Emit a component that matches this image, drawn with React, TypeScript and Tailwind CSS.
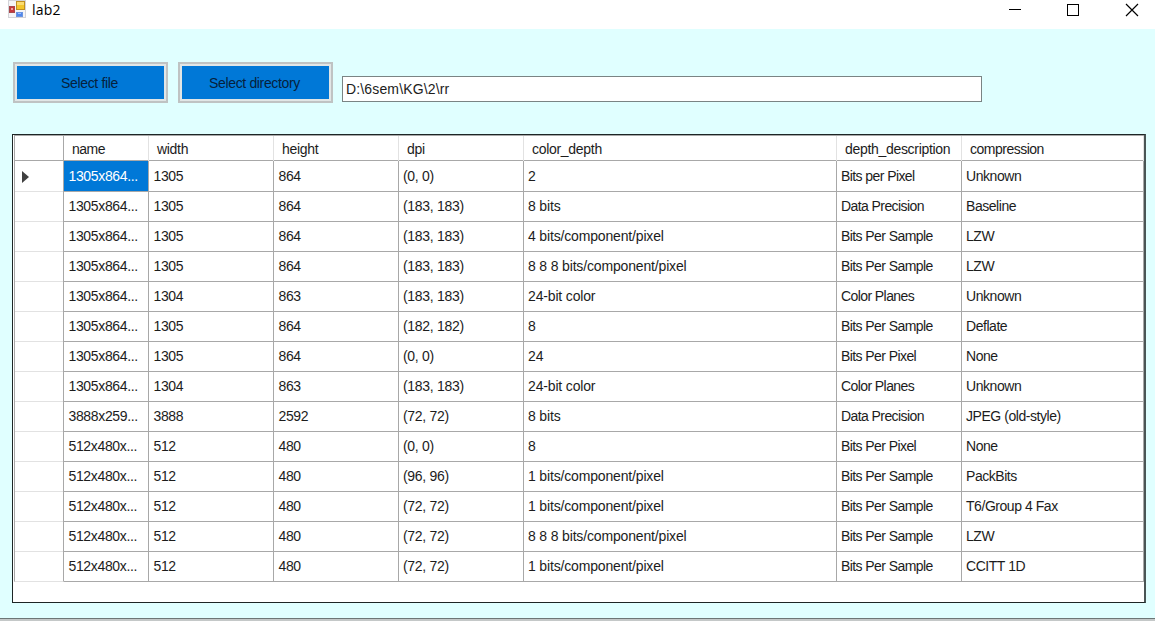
type Row = [string, string, string, string, string, string, string];

const headers: Row = ['name', 'width', 'height', 'dpi', 'color_depth', 'depth_description', 'compression'];

const rows: Row[] = [
  ['1305x864...', '1305', '864', '(0, 0)', '2', 'Bits per Pixel', 'Unknown'],
  ['1305x864...', '1305', '864', '(183, 183)', '8 bits', 'Data Precision', 'Baseline'],
  ['1305x864...', '1305', '864', '(183, 183)', '4 bits/component/pixel', 'Bits Per Sample', 'LZW'],
  ['1305x864...', '1305', '864', '(183, 183)', '8 8 8 bits/component/pixel', 'Bits Per Sample', 'LZW'],
  ['1305x864...', '1304', '863', '(183, 183)', '24-bit color', 'Color Planes', 'Unknown'],
  ['1305x864...', '1305', '864', '(182, 182)', '8', 'Bits Per Sample', 'Deflate'],
  ['1305x864...', '1305', '864', '(0, 0)', '24', 'Bits Per Pixel', 'None'],
  ['1305x864...', '1304', '863', '(183, 183)', '24-bit color', 'Color Planes', 'Unknown'],
  ['3888x259...', '3888', '2592', '(72, 72)', '8 bits', 'Data Precision', 'JPEG (old-style)'],
  ['512x480x...', '512', '480', '(0, 0)', '8', 'Bits Per Pixel', 'None'],
  ['512x480x...', '512', '480', '(96, 96)', '1 bits/component/pixel', 'Bits Per Sample', 'PackBits'],
  ['512x480x...', '512', '480', '(72, 72)', '1 bits/component/pixel', 'Bits Per Sample', 'T6/Group 4 Fax'],
  ['512x480x...', '512', '480', '(72, 72)', '8 8 8 bits/component/pixel', 'Bits Per Sample', 'LZW'],
  ['512x480x...', '512', '480', '(72, 72)', '1 bits/component/pixel', 'Bits Per Sample', 'CCITT 1D'],
];

const columns = 'grid grid-cols-[50px_85px_125px_125px_125px_313px_125px_182px]';

const headerTracking = [
  'tracking-[-0.5px]',
  'tracking-[-0.3px]',
  'tracking-[-0.3px]',
  'tracking-[-0.3px]',
  'tracking-[-0.3px]',
  'tracking-[-0.31px]',
  'tracking-[-0.5px]',
];

const cellStyle = [
  'pl-[4.5px] tracking-[-0.35px]',
  'pl-[4.5px] tracking-[-0.35px]',
  'pl-[4.5px] tracking-[-0.35px]',
  'pl-1 tracking-[-0.3px]',
  'pl-1 tracking-[-0.16px]',
  'pl-1 tracking-[-0.58px]',
  'pl-1 tracking-[-0.45px]',
];

function AppIcon() {
  return (
    <svg width="18" height="18" viewBox="0 0 18 18" className="shrink-0">
      <rect x="0.5" y="0.5" width="17" height="17" fill="#f4f4f6" stroke="#d3d3d8" />
      <rect x="1.5" y="6.5" width="5" height="6" fill="#c8383c" stroke="#a8484c" />
      <rect x="3" y="8" width="2" height="2" fill="#f0a09c" />
      <rect x="8.5" y="1.5" width="8" height="8" fill="#f3c62c" stroke="#c08f20" />
      <rect x="9" y="2" width="7" height="3" fill="#fbdc70" />
      <rect x="8.5" y="12.5" width="6" height="4" fill="#4f86ec" stroke="#6a94e0" />
      <rect x="10" y="13" width="3" height="1" fill="#9dc0ff" />
    </svg>
  );
}

function TitleBar() {
  return (
    <header className="flex h-[29px] items-start bg-white pl-2">
      <AppIcon />
      <span className="ml-1.5 grow font-['Open_Sans','Noto_Sans',sans-serif] text-[14px] leading-[19px] tracking-[0.2px] text-black">lab2</span>
      <svg width="147" height="20" viewBox="0 0 147 20" fill="none" stroke="#000" shapeRendering="crispEdges">
        <path d="M1 9.5h12" />
        <path d="M59.5 4.5h11v11h-11z" />
        <path d="M118 4l12 12M130 4l-12 12" strokeWidth="1.2" shapeRendering="auto" />
      </svg>
    </header>
  );
}

function ActionButton({ label }: { label: string }) {
  return (
    <button className="h-[41px] w-[155px] border-2 border-[#bfc3c3] bg-[#e1e6e6] p-[2px] tracking-[-0.35px]">
      <span className="flex h-full items-center justify-center bg-[#0078d7] pt-0.5 pr-0.5 text-[#06213c]">{label}</span>
    </button>
  );
}

export default function App() {
  return (
    <div className="flex h-[621px] w-[1155px] flex-col overflow-hidden bg-[#e0ffff] font-['Liberation_Sans',Arial,sans-serif] text-[14px] text-[#1c1c1c]">
      <TitleBar />
      <main className="flex grow flex-col pt-[33px] pl-3">
        <div className="flex items-start pl-px">
          <ActionButton label="Select file" />
          <div className="ml-[10px]">
            <ActionButton label="Select directory" />
          </div>
          <div className="mt-[14px] ml-[9px] flex h-[26px] w-[640px] items-center border border-[#7a8484] bg-white pl-[3px] tracking-[0.15px]">D:\6sem\KG\2\rr</div>
        </div>
        <section className="mt-[31px] h-[469px] w-[1134px] border border-r-2 border-[#1d2525] border-r-[#4a5555] bg-white">
          <div className="ml-px w-[1130px]">
            <div className={`${columns} h-[26px] border-t border-b border-[#a8a8a8]`}>
              <div className="border-r border-l border-[#a8a8a8]" />
              {headers.map((h, i) => (
                <div key={h} className={`border-r border-[#e2e2e2] pl-2 leading-[27px] whitespace-nowrap ${headerTracking[i]}`}>{h}</div>
              ))}
            </div>
            {rows.map((row, r) => (
              <div key={r} className={`${columns} h-[30px]`}>
                <div className="flex items-center border-r border-b border-l border-r-[#a8a8a8] border-b-[#e2e2e2] border-l-[#a8a8a8] pt-0.5 pl-[7px]">
                  {r === 0 && (
                    <svg width="7" height="12" viewBox="0 0 7 12" fill="#404040">
                      <path d="M0 0l7 6-7 6z" />
                    </svg>
                  )}
                </div>
                {row.map((cell, c) => (
                  <div
                    key={c}
                    className={`border-r border-b border-[#a8a8a8] leading-[30px] whitespace-nowrap ${cellStyle[c]} ${r === 0 && c === 0 ? 'bg-[#0078d7] text-white' : ''}`}
                  >
                    {cell}
                  </div>
                ))}
              </div>
            ))}
          </div>
        </section>
      </main>
      <div className="h-[3px] shrink-0 border-t border-[#6c7676] bg-[#c4c8c8]" />
    </div>
  );
}
